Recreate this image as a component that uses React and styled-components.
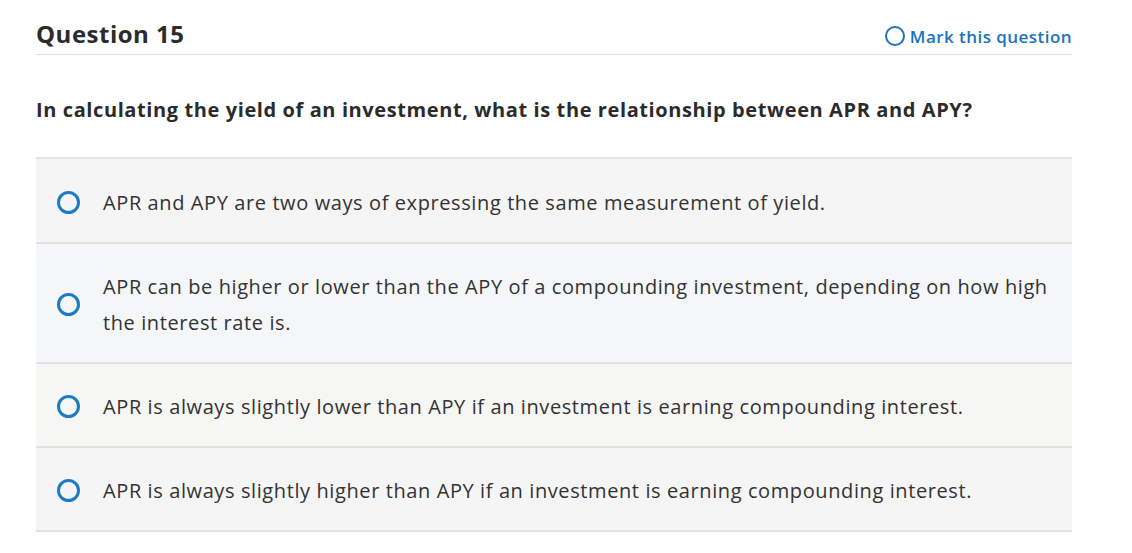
import React from "react";
import styled, { createGlobalStyle } from "styled-components";

const options = [
  "APR and APY are two ways of expressing the same measurement of yield.",
  "APR can be higher or lower than the APY of a compounding investment, depending on how high the interest rate is.",
  "APR is always slightly lower than APY if an investment is earning compounding interest.",
  "APR is always slightly higher than APY if an investment is earning compounding interest.",
];

const rowColors = ["#f5f5f5", "#f4f6f8", "#f6f6f5", "#f5f5f5"];

export default function App() {
  return (
    <>
      <GlobalStyle />
      <Page>
        <Header>
          <Title>Question 15</Title>
          <MarkLink type="button">
            <MarkCircle />
            Mark this question
          </MarkLink>
        </Header>
        <Prompt>
          In calculating the yield of an investment, what is the relationship
          between APR and APY?
        </Prompt>
        <OptionList>
          {options.map((text, i) => (
            <Option key={i} bg={rowColors[i]}>
              <RadioWrap>
                <Radio />
              </RadioWrap>
              <OptionText>{text}</OptionText>
            </Option>
          ))}
        </OptionList>
      </Page>
    </>
  );
}

const GlobalStyle = createGlobalStyle`
  body {
    margin: 0;
    background: #fff;
    font-family: "Open Sans", "Liberation Sans", sans-serif;
    color: #2d2d2d;
  }
`;

const Page = styled.main`
  width: 1036px;
  margin-left: 36px;
  padding-top: 15px;
`;

const Header = styled.header`
  display: flex;
  align-items: center;
  justify-content: space-between;
  height: 38px;
  padding-bottom: 1px;
  border-bottom: 1px solid #e2e2e2;
`;

const Title = styled.h1`
  margin: 0;
  font-size: 24px;
  font-weight: 700;
  color: #2b2b2b;
  line-height: 36px;
  letter-spacing: 0.5px;
`;

const MarkLink = styled.button`
  display: flex;
  align-items: center;
  gap: 5px;
  background: none;
  border: 0;
  padding: 4px 0 0;
  font-family: inherit;
  font-size: 17px;
  font-weight: 600;
  letter-spacing: 0.45px;
  color: #1b73bf;
  cursor: pointer;
`;

const MarkCircle = styled.span`
  box-sizing: border-box;
  width: 20px;
  height: 20px;
  border: 2px solid #1b73bf;
  border-radius: 50%;
`;

const Prompt = styled.h2`
  margin: 0;
  padding: 40px 0 32px;
  font-size: 20px;
  font-weight: 700;
  letter-spacing: 0.6px;
  line-height: 30px;
  color: #2b2b2b;
`;

const OptionList = styled.ul`
  list-style: none;
  margin: 0;
  padding: 0;
  border-top: 2px solid #e4e4e4;
`;

const Option = styled.li`
  display: flex;
  align-items: center;
  background: ${(p) => p.bg};
  padding: 25px 24px 21px 21px;
  border-bottom: 2px solid #e2e2e2;

  &:first-child {
    padding-top: 26px;
  }
`;

const RadioWrap = styled.span`
  flex: 0 0 46px;
  display: flex;
  align-items: center;
  padding-bottom: 2px;
`;

const Radio = styled.span`
  box-sizing: border-box;
  width: 23px;
  height: 23px;
  border: 3px solid #1a7bc6;
  border-radius: 50%;
`;

const OptionText = styled.span`
  font-size: 20px;
  letter-spacing: 0.6px;
  line-height: 36px;
  color: #333;
`;
